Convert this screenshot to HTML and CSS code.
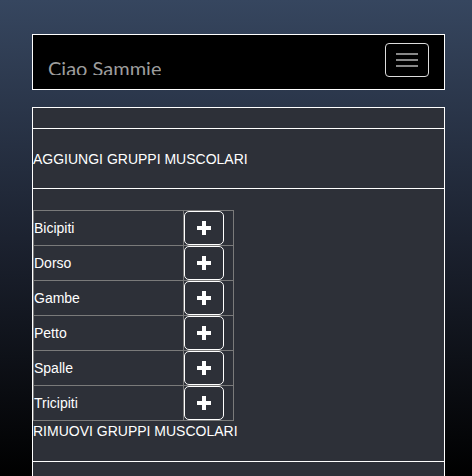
FILE: index.html
```html
<!DOCTYPE html>
<html lang="it">
<head>
    <meta charset="UTF-8">
    <meta name="viewport" content="width=device-width, initial-scale=1.0">
    <title>Ciao Sammie</title>
    <link rel="stylesheet" href="styles.css">
</head>
<body>
    <nav class="navbar">
        <div class="brand">Ciao Sammie</div>
        <button class="toggler" type="button">
            <span class="bar"></span>
            <span class="bar"></span>
            <span class="bar"></span>
        </button>
    </nav>
    <div class="card">
        <div class="card-top"></div>
        <div class="card-header">AGGIUNGI GRUPPI MUSCOLARI</div>
        <div class="card-body">
            <table class="groups">
                <tr><td class="name">Bicipiti</td><td class="action"><button class="add"><svg width="14" height="14" viewBox="0 0 14 14"><rect x="5" y="0" width="4" height="14" fill="#fff"/><rect x="0" y="5" width="14" height="4" fill="#fff"/></svg></button></td></tr>
                <tr><td class="name">Dorso</td><td class="action"><button class="add"><svg width="14" height="14" viewBox="0 0 14 14"><rect x="5" y="0" width="4" height="14" fill="#fff"/><rect x="0" y="5" width="14" height="4" fill="#fff"/></svg></button></td></tr>
                <tr><td class="name">Gambe</td><td class="action"><button class="add"><svg width="14" height="14" viewBox="0 0 14 14"><rect x="5" y="0" width="4" height="14" fill="#fff"/><rect x="0" y="5" width="14" height="4" fill="#fff"/></svg></button></td></tr>
                <tr><td class="name">Petto</td><td class="action"><button class="add"><svg width="14" height="14" viewBox="0 0 14 14"><rect x="5" y="0" width="4" height="14" fill="#fff"/><rect x="0" y="5" width="14" height="4" fill="#fff"/></svg></button></td></tr>
                <tr><td class="name">Spalle</td><td class="action"><button class="add"><svg width="14" height="14" viewBox="0 0 14 14"><rect x="5" y="0" width="4" height="14" fill="#fff"/><rect x="0" y="5" width="14" height="4" fill="#fff"/></svg></button></td></tr>
                <tr><td class="name">Tricipiti</td><td class="action"><button class="add"><svg width="14" height="14" viewBox="0 0 14 14"><rect x="5" y="0" width="4" height="14" fill="#fff"/><rect x="0" y="5" width="14" height="4" fill="#fff"/></svg></button></td></tr>
            </table>
            <div class="section-title">RIMUOVI GRUPPI MUSCOLARI</div>
        </div>
        <div class="card-footer"></div>
    </div>
</body>
</html>
```

FILE: styles.css
```css
html {
    height: 100%;
}
body {
    margin: 0;
    min-height: 100%;
    padding: 34px 27px 0 32px;
    box-sizing: border-box;
    font-family: "Liberation Sans", Arial, sans-serif;
    font-size: 14px;
    line-height: 20px;
    color: white;
    background: linear-gradient(to bottom, #36465f 0%, #1c2230 50%, #000 100%);
    overflow: hidden;
}
.navbar {
    display: flex;
    justify-content: space-between;
    align-items: flex-start;
    padding: 8px 15px 0 15px;
    height: 46px;
    background: #000;
    border: 1px solid #fff;
}
.brand {
    margin-top: 13px;
    height: 19px;
    overflow: hidden;
    font-family: Lato, "Liberation Sans", sans-serif;
    font-size: 20px;
    line-height: 24px;
    color: #9d9d9d;
    white-space: nowrap;
}
.toggler {
    display: flex;
    flex-direction: column;
    align-items: center;
    justify-content: center;
    gap: 4px;
    width: 44px;
    height: 34px;
    padding: 0;
    margin: 0;
    background: transparent;
    border: 1px solid #ddd;
    border-radius: 4px;
}
.bar {
    display: block;
    width: 22px;
    height: 2px;
    background: #888;
}
.card {
    margin-top: 17px;
    background: #2d3038;
    border: 1px solid #fff;
}
.card-top {
    height: 20px;
    border-bottom: 1px solid #fff;
}
.card-header {
    padding: 20px 0 19px;
    border-bottom: 1px solid #fff;
}
.card-body {
    padding: 21px 0 20px;
}
.groups {
    border-collapse: collapse;
}
.groups td {
    padding: 0;
    height: 34px;
    border: 1px solid #7a7a7a;
    vertical-align: middle;
}
.groups .name {
    width: 149px;
}
.groups .action {
    width: 49px;
}
.add {
    display: flex;
    align-items: center;
    justify-content: center;
    width: 40px;
    height: 34px;
    padding: 0;
    margin: 0;
    background: transparent;
    border: 1px solid #fff;
    border-radius: 5px;
}
.card-footer {
    height: 40px;
    border-top: 1px solid #fff;
}
```
